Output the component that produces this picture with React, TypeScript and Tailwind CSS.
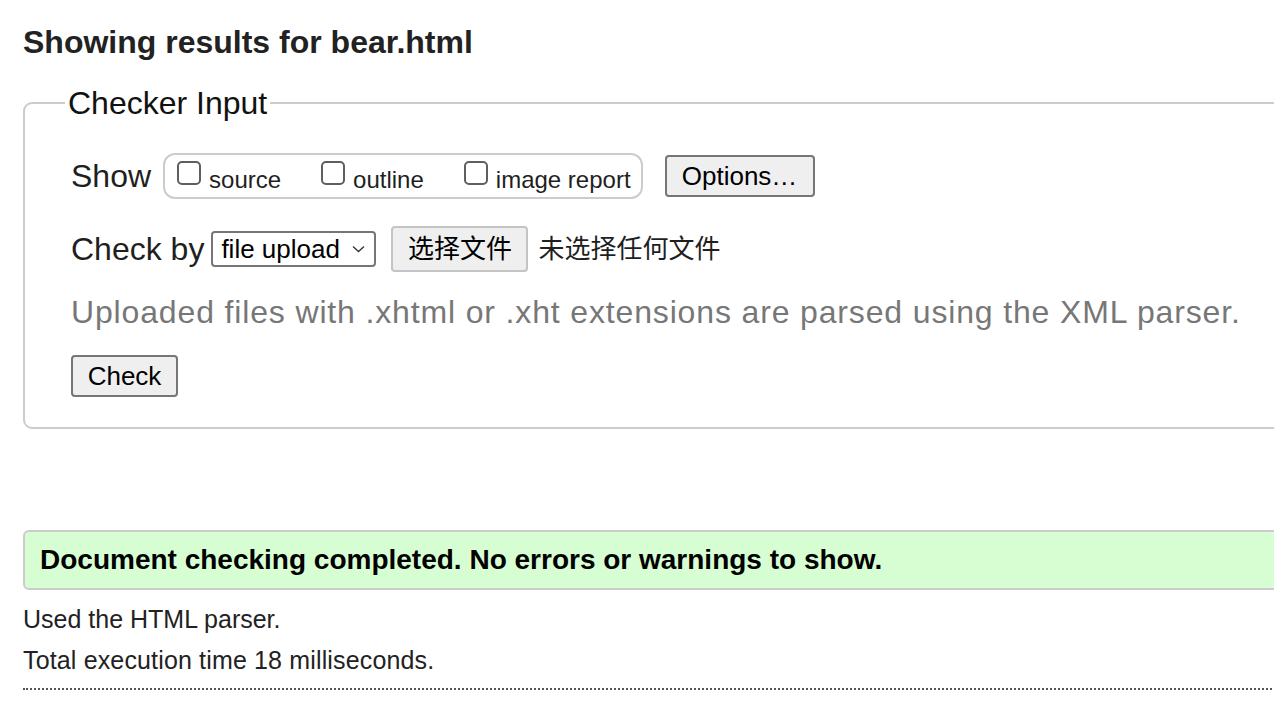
import React from 'react';

const checks = [
  { label: 'source', gap: 'ml-0' },
  { label: 'outline', gap: 'ml-[40px]' },
  { label: 'image report', gap: 'ml-[40px]' },
];

function Box() {
  return <span className="inline-block h-[24px] w-[24px] shrink-0 rounded-[5px] border-2 border-[#5f5f5f] bg-white" />;
}

export default function App() {
  return (
    <div className="h-[702px] w-[1274px] overflow-hidden bg-white font-['Liberation_Sans','Noto_Sans_CJK_SC',sans-serif] text-[#1f1f1f]">
      <div className="w-[1340px] pl-[23px]">
        <h1 className="mt-[24px] text-[32px] font-bold leading-[36px] text-[#222]">Showing results for bear.html</h1>

        {/* Checker input */}
        <fieldset className="mt-[25px] rounded-[9px] border-2 border-[#cccccc] pb-[30px] pl-[40px]">
          <legend className="px-[3px] text-[32px] leading-[36px] text-[#111]">Checker Input</legend>
          <div className="pl-[6px]">
            <div className="mt-[32px] flex h-[46px] items-center">
              <span className="text-[32px] leading-[36px]">Show</span>
              <div className="ml-[12px] flex h-[46px] items-center rounded-[12px] border-2 border-[#cccccc] pl-[12px] pr-[10px]">
                {checks.map((c) => (
                  <label key={c.label} className={`${c.gap} flex items-center`}>
                    <span className="mt-[1px]"><Box /></span>
                    <span className="ml-[8px] mt-[8px] text-[24px] leading-[28px]">{c.label}</span>
                  </label>
                ))}
              </div>
              <button className="ml-[22px] h-[42px] w-[150px] rounded-[4px] border-2 border-[#767676] bg-[#efefef] text-[26px] leading-[30px] text-black">
                Options…
              </button>
            </div>

            <div className="mt-[27px] flex h-[46px] items-center">
              <span className="text-[32px] leading-[36px]">Check by</span>
              <div className="ml-[7px] flex h-[36px] w-[165px] items-center justify-between rounded-[4px] border-2 border-[#767676] bg-white pl-[8px] pr-[9px]">
                <span className="text-[26px] leading-[30px] text-black">file upload</span>
                <svg width="13" height="8" viewBox="0 0 13 8" fill="none" stroke="#333" strokeWidth="1.3">
                  <path d="M1 1.5 L6.5 6.5 L12 1.5" />
                </svg>
              </div>
              <button className="ml-[15px] h-[46px] w-[137px] rounded-[4px] border-2 border-[#c4c4c4] bg-[#efefef] text-[26px] leading-[30px] text-black">
                选择文件
              </button>
              <span className="ml-[10px] text-[26px] leading-[30px]">未选择任何文件</span>
            </div>

            <p className="mt-[22px] text-[32px] leading-[36px] tracking-[0.85px] text-[#777777]">
              Uploaded files with .xhtml or .xht extensions are parsed using the XML parser.
            </p>

            <button className="mt-[25px] block h-[42px] w-[107px] rounded-[4px] border-2 border-[#767676] bg-[#efefef] text-[26px] leading-[30px] text-black">
              Check
            </button>
          </div>
        </fieldset>

        {/* Result */}
        <div className="mt-[101px] rounded-[6px] border-2 border-[#cccccc] bg-[#d7fed2] px-[15px] py-[12px]">
          <p className="text-[28px] font-bold leading-[32px] text-black">Document checking completed. No errors or warnings to show.</p>
        </div>
        <p className="mt-[14px] text-[25px] leading-[30px] text-[#222]">Used the HTML parser.</p>
        <p className="mt-[11px] text-[25px] leading-[30px] tracking-[0.15px] text-[#222]">Total execution time 18 milliseconds.</p>
        <div className="mt-[13px] border-t-2 border-dotted border-[#555555]" />
      </div>
    </div>
  );
}
